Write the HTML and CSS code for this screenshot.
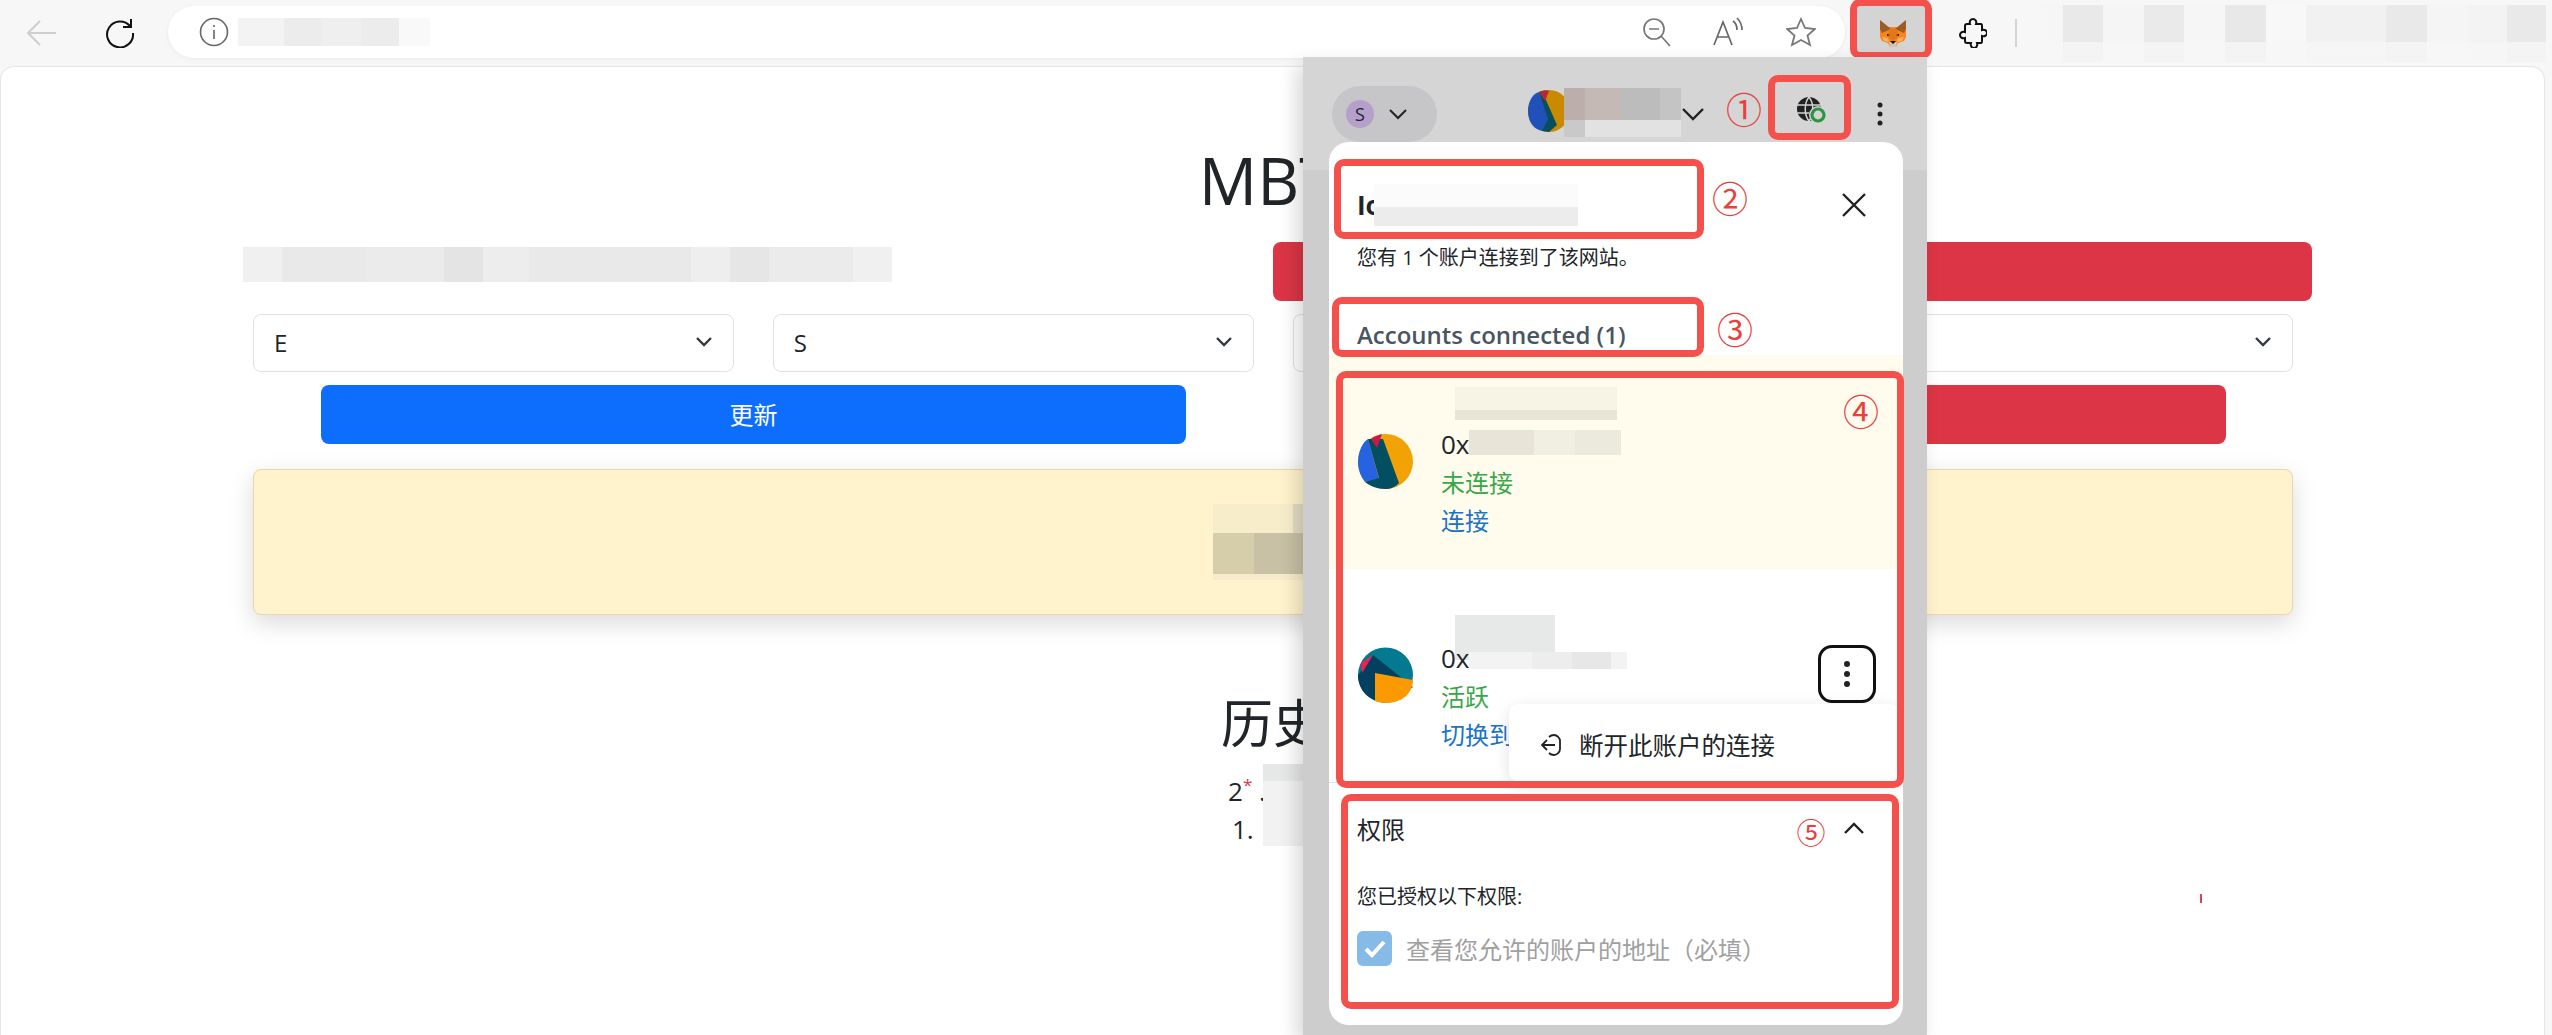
FILE: index.html
```html
<!DOCTYPE html>
<html lang="zh-CN">
<head>
    <meta charset="UTF-8">
    <title>MBTI</title>
    <link rel="stylesheet" href="styles.css">
</head>
<body>
    <header class="toolbar">
        <button class="nav-btn back">
            <svg width="30" height="26" viewBox="0 0 30 26" fill="none" stroke="#cfcfcf" stroke-width="2"><path d="M1 13h28M13 1 1 13l12 12"/></svg>
        </button>
        <button class="nav-btn reload">
            <svg width="30" height="30" viewBox="0 0 30 30" fill="none" stroke="#111" stroke-width="2"><path d="M25 8A13 13 0 1 0 28 15"/><path d="M26 1v8h-8"/></svg>
        </button>
        <div class="address">
            <svg class="info" width="30" height="30" viewBox="0 0 30 30" fill="none" stroke="#666" stroke-width="1.6"><circle cx="15" cy="15" r="13.5"/><path d="M15 13v9M15 8v2"/></svg>
            <span class="mosaic mosaic-url"></span>
            <div class="address-icons">
                <svg width="30" height="30" viewBox="0 0 30 30" fill="none" stroke="#777" stroke-width="1.7"><circle cx="12" cy="12" r="10"/><path d="M7 12h10M19 19l9 10"/></svg>
                <svg width="34" height="30" viewBox="0 0 34 30" fill="none" stroke="#666" stroke-width="1.7"><path d="M2 28 11 5l9 23M5 20h12M21 4c3 2 4 5 4 9M25 1c3 3 5 7 5 12"/></svg>
                <svg width="30" height="30" viewBox="0 0 30 30" fill="none" stroke="#777" stroke-width="1.8"><path d="m15 2 4 9 10 1-7.500 6.500L24 28l-9-5-9 5 2.500-9.500L1 12l10-1z"/></svg>
            </div>
        </div>
        <button class="fox-btn">
            <svg width="28" height="27" viewBox="0 0 28 27">
                <path fill="#f6851b" d="M1 9l6-2h14l6 2v8l-2 4-6 2-2 4h-6l-2-4-6-2-2-4z"/>
                <path fill="#9c5c26" d="M1 0l11 9-9 4-2-4zM27 0 16 9l9 4 2-4z"/>
                <path fill="#e4761b" d="M10 9h8l1 8-5 4-5-4z"/>
                <path fill="#fbb066" d="M3 17l6 1 1 4-5-1zM25 17l-6 1-1 4 5-1z"/>
                <path fill="#d7c1b3" d="M10 22h8l-1 5h-6z"/>
                <path fill="#161616" d="M11 21h6l-3 3zM8 14l3 1-3 1zM20 14l-3 1 3 1z"/>
            </svg>
        </button>
        <svg class="puzzle" width="28" height="30" viewBox="0 0 28 30" fill="none" stroke="#111" stroke-width="2"><path d="M8 6h3c-1-3 1-5 3-5s4 2 3 5h5c1 0 1 1 1 2v4c3-1 5 1 5 3s-2 4-5 3v5c0 1 0 2-1 2h-4c1 3-1 5-3 5s-4-2-3-5H8c-1 0-2-1-2-2v-3c-3 1-5-1-5-3s2-4 5-3V8c0-1 1-2 2-2z"/></svg>
        <span class="toolbar-sep"></span>
        <span class="mosaic mosaic-tools"></span>
    </header>

    <main class="page">
        <div class="content">
            <h1 class="title">MBTI</h1>
            <div class="top-row">
                <span class="mosaic mosaic-intro"></span>
                <button class="btn btn-red"></button>
            </div>
            <div class="selects">
                <div class="select">E<svg class="caret" width="18" height="12" viewBox="0 0 18 12" fill="none" stroke="#343a40" stroke-width="2.400"><path d="m2 2 7 7 7-7"/></svg></div>
                <div class="select">S<svg class="caret" width="18" height="12" viewBox="0 0 18 12" fill="none" stroke="#343a40" stroke-width="2.400"><path d="m2 2 7 7 7-7"/></svg></div>
                <div class="select"></div>
                <div class="select"><svg class="caret" width="18" height="12" viewBox="0 0 18 12" fill="none" stroke="#343a40" stroke-width="2.400"><path d="m2 2 7 7 7-7"/></svg></div>
            </div>
            <div class="actions">
                <button class="btn btn-blue">更新</button>
                <button class="btn btn-red"></button>
            </div>
            <div class="alert"><span class="mosaic mosaic-alert"></span></div>
            <h2 class="history-title">历史</h2>
            <div class="history">
                <span class="mosaic mosaic-history"></span>
                <div class="history-line">2<sup>*</sup> .</div>
                <div class="history-line">1.</div>
            </div>
        </div>
        <span class="red-tick"></span>
    </main>

    <section class="popup">
        <div class="popup-head">
            <div class="network">
                <span class="network-dot">S</span>
                <svg width="20" height="12" viewBox="0 0 20 12" fill="none" stroke="#222" stroke-width="2"><path d="m2 2 8 8 8-8"/></svg>
            </div>
            <div class="account-pick">
                <svg class="pick-avatar" width="42" height="42" viewBox="0 0 42 42">
                    <circle cx="21" cy="21" r="21" fill="#c98a00"/>
                    <path fill="#2050b8" d="M0 21C0 10 6 3 11 2l10 26-6 13C6 40 0 32 0 21z"/>
                    <path fill="#064f5c" d="M11 2l3-1 15 34-8 7-7-1 6-12z"/>
                    <path fill="#b02a3a" d="M11 2c4-2 8-2 10-1l-4 10z"/>
                </svg>
                <span class="mosaic mosaic-pick"></span>
                <svg class="pick-caret" width="24" height="14" viewBox="0 0 24 14" fill="none" stroke="#222" stroke-width="2.400"><path d="m2 2 10 10L22 2"/></svg>
            </div>
            <svg class="globe" width="30" height="28" viewBox="0 0 30 28">
                <circle cx="12" cy="12" r="12" fill="#222"/>
                <path stroke="#d4d4d4" stroke-width="1.500" fill="none" d="M0 8h24M0 16h12M12 0c-5 6-5 18 0 24M12 0c5 6 5 18 0 24"/>
                <circle cx="21" cy="18" r="9" fill="#d4d4d4"/>
                <circle cx="21" cy="18" r="6" fill="none" stroke="#2a9640" stroke-width="3.200"/>
            </svg>
            <svg class="dots" width="6" height="24" viewBox="0 0 6 24" fill="#222"><circle cx="3" cy="3" r="2.500"/><circle cx="3" cy="12" r="2.500"/><circle cx="3" cy="21" r="2.500"/></svg>
        </div>

        <div class="sheet">
            <div class="site-row">
                <strong class="site-name">Io</strong>
                <span class="mosaic mosaic-site"></span>
                <svg class="close" width="26" height="26" viewBox="0 0 26 26" fill="none" stroke="#222" stroke-width="2.400"><path d="m2 2 22 22M24 2 2 24"/></svg>
            </div>
            <p class="site-note">您有 1 个账户连接到了该网站。</p>
            <h3 class="accounts-title">Accounts connected (1)</h3>

            <div class="account account-new">
                <svg class="avatar" width="55" height="55" viewBox="0 0 55 55">
                    <circle cx="27.500" cy="27.500" r="27.500" fill="#f2a205"/>
                    <path fill="#2563e0" d="M0 28C0 17 5 8 10 5l11 40-14 3C3 43 0 36 0 28z"/>
                    <path fill="#014f60" d="M10 5l15 0 16 44c-4 4-8 6-14 6-8 0-15-3-20-7l14-4z"/>
                    <path fill="#c8174f" d="M13 5c4-3 8-4 11-5l-5 14z"/>
                </svg>
                <div class="account-info">
                    <span class="mosaic mosaic-name-a"></span>
                    <div class="address-line">0x<span class="mosaic mosaic-addr-a"></span></div>
                    <div class="status">未连接</div>
                    <a class="link">连接</a>
                </div>
            </div>

            <div class="account account-active">
                <svg class="avatar" width="55" height="56" viewBox="0 0 55 56">
                    <circle cx="27.500" cy="28" r="27.500" fill="#047a90"/>
                    <path fill="#033f5f" d="M0 28 15 8l40 32-24 16C12 56 0 44 0 28z"/>
                    <path fill="#f01e55" d="M3 16 15 8 4 26z"/>
                    <path fill="#fb9a00" d="M17 26l38 7c0 13-11 23-27 23-4 0-8-1-11-2z"/>
                </svg>
                <div class="account-info">
                    <span class="mosaic mosaic-name-b"></span>
                    <div class="address-line">0x<span class="mosaic mosaic-addr-b"></span></div>
                    <div class="status">活跃</div>
                    <a class="link">切换到此账户</a>
                </div>
                <button class="kebab">
                    <svg width="6" height="26" viewBox="0 0 6 26" fill="#222"><circle cx="3" cy="3" r="3"/><circle cx="3" cy="13" r="3"/><circle cx="3" cy="23" r="3"/></svg>
                </button>
                <div class="account-menu">
                    <svg width="20" height="22" viewBox="0 0 20 22" fill="none" stroke="#222" stroke-width="1.800"><path d="M8 3c1-1 3-2 5-2 3 0 6 3 6 6v8c0 3-3 6-6 6-2 0-4-1-5-2M14 11H1M6 6l-5 5 5 5"/></svg>
                    <span>断开此账户的连接</span>
                </div>
            </div>

            <div class="permissions">
                <div class="perm-head">
                    <span>权限</span>
                    <svg width="22" height="13" viewBox="0 0 22 13" fill="none" stroke="#222" stroke-width="2.400"><path d="m2 11 9-9 9 9"/></svg>
                </div>
                <p class="perm-note">您已授权以下权限:</p>
                <label class="perm-item">
                    <span class="checkbox">
                        <svg width="24" height="20" viewBox="0 0 24 20" fill="none" stroke="#fff" stroke-width="4"><path d="m3 10 6 6L21 3"/></svg>
                    </span>
                    查看您允许的账户的地址（必填）
                </label>
            </div>
        </div>

        <span class="mark mark-1"></span>
        <span class="mark mark-2"></span>
        <span class="mark mark-3"></span>
        <span class="mark mark-4"></span>
        <span class="mark mark-5"></span>
        <span class="num num-1">①</span>
        <span class="num num-2">②</span>
        <span class="num num-3">③</span>
        <span class="num num-4">④</span>
        <span class="num num-5">⑤</span>
    </section>
</body>
</html>
```

FILE: styles.css
```css
* {
    box-sizing: border-box;
}

html, body {
    height: 100%;
}

body {
    margin: 0;
    position: relative;
    overflow: hidden;
    background-color: #f7f7f7;
    color: #212529;
    font-family: "Open Sans", "Noto Sans CJK SC", sans-serif;
}

button {
    border: none;
    padding: 0;
    background: none;
    font-family: inherit;
}

p, h1, h2, h3 {
    margin: 0;
}

/* pixelated areas from the screenshot */
.mosaic {
    display: block;
    flex: none;
}

.mosaic-url {
    width: 192px;
    height: 28px;
    background: linear-gradient(90deg, #f3f3f3 0 24%, #ececec 24% 44%, #efefef 44% 64%, #ececec 64% 84%, #f9f9f9 84%);
}

.mosaic-tools {
    width: 505px;
    height: 57px;
    margin-left: 24px;
    background:
        linear-gradient(#0000 0 37px, rgba(247, 247, 247, 0.75) 37px),
        linear-gradient(90deg, #f6f6f6 0 22px, #e9e9e9 22px 62px, #f5f5f5 62px 103px, #eaeaea 103px 143px, #f6f6f6 143px 184px, #e8e8e8 184px 225px, #f8f8f8 225px 265px, #f1f1f1 265px 345px, #e9e9e9 345px 386px, #f5f5f5 386px 427px, #f3f3f3 427px 466px, #e9e9e9 466px);
}

.mosaic-intro {
    width: 649px;
    height: 35px;
    background: linear-gradient(90deg, #f0f0f0 0 6%, #e9e9e9 6% 19%, #ebebeb 19% 31%, #e4e4e4 31% 37%, #ededed 37% 44%, #e9e9e9 44% 69%, #eeeeee 69% 75%, #e6e6e6 75% 81%, #ebebeb 81% 94%, #f0f0f0 94%);
}

.mosaic-alert {
    width: 100px;
    height: 76px;
    margin-right: 20px;
    background:
        linear-gradient(90deg, #f8edcb 0 80px, #e3dcc5 80px) 0 0 / 100% 29px no-repeat,
        linear-gradient(#0000 70px, #f6ebca 70px),
        linear-gradient(90deg, #d6cdab 0 41px, #c9c1a5 41px);
}

.mosaic-history {
    position: absolute;
    left: 1010px;
    top: -2px;
    width: 40px;
    height: 82px;
    background: linear-gradient(#e6e7e7 0 17px, #f2f2f2 17px);
}

.mosaic-pick {
    width: 117px;
    height: 49px;
    margin-left: -12px;
    background:
        linear-gradient(90deg, #c9c9c9 0 18%, #0000 18%) 0 100% / 100% 17px no-repeat,
        linear-gradient(#0000 0 32px, #e2e2e2 32px),
        linear-gradient(90deg, #bcaeab 0 18%, #c4b9b5 18% 48%, #bcbcbc 48% 82%, #c4c4c4 82%);
}

.mosaic-site {
    width: 204px;
    height: 42px;
    margin-left: -8px;
    background: linear-gradient(#fbfbfb 0 55%, #ececec 55%);
}

.mosaic-addr-a {
    width: 152px;
    height: 25px;
    background: linear-gradient(90deg, #e8e5d8 0 43%, #f1eee2 43% 70%, #ece9dd 70%);
}

.mosaic-addr-b {
    width: 158px;
    height: 17px;
    margin-top: 8px;
    background: linear-gradient(90deg, #f3f3f3 0 40%, #ededed 40% 65%, #e7e7e7 65% 90%, #f3f3f3 90%);
}

.mosaic-name-a {
    width: 162px;
    height: 33px;
    margin-left: 14px;
    background: linear-gradient(#f7f4e6 0 70%, #e8e5d8 70%);
}

.mosaic-name-b {
    width: 100px;
    height: 45px;
    margin-left: 14px;
    margin-bottom: -16px;
    background: #e7e8e8;
}

/* browser toolbar */
.toolbar {
    display: flex;
    align-items: center;
    height: 66px;
    padding-left: 27px;
}

.nav-btn {
    display: flex;
    width: 30px;
}

.reload {
    margin-left: 48px;
}

.address {
    display: flex;
    align-items: center;
    width: 1677px;
    height: 52px;
    margin-left: 33px;
    margin-bottom: 2px;
    padding-left: 31px;
    border-radius: 26px;
    background-color: #fff;
    box-shadow: 0 1px 4px rgba(0, 0, 0, 0.06);
}

.mosaic-url {
    margin-left: 9px;
}

.address-icons {
    display: flex;
    gap: 40px;
    margin-left: auto;
    margin-right: 29px;
}

.fox-btn {
    display: flex;
    align-items: center;
    justify-content: center;
    width: 82px;
    height: 60px;
    margin-left: 5px;
    margin-top: -8px;
    padding: 8px 0 0 4px;
    border: 7px solid #f4504c;
    border-radius: 10px;
    background-color: #d4d4d4;
}

.puzzle {
    margin-left: 27px;
}

.toolbar-sep {
    width: 2px;
    height: 28px;
    margin-left: 28px;
    background-color: #d4d4d4;
}

/* page under the popup */
.page {
    position: relative;
    height: 969px;
    margin-right: 7px;
    border: 1px solid #e6e6e6;
    border-bottom: none;
    border-radius: 14px 14px 0 0;
    background-color: #fff;
}

.content {
    width: 2040px;
    margin-left: 252px;
}

.title {
    margin-top: 75px;
    padding-left: 6px;
    font-size: 65px;
    font-weight: 400;
    line-height: 76px;
    text-align: center;
}

.top-row {
    display: grid;
    grid-template-columns: 1030px 1039px;
    align-items: start;
    margin: 24px 0 0 -10px;
}

.mosaic-intro {
    margin-top: 5px;
}

.btn {
    height: 59px;
    padding-bottom: 3px;
    border-radius: 8px;
    color: #fff;
    font-size: 24px;
}

.btn-red {
    background-color: #dc3545;
}

.btn-blue {
    background-color: #0d6efd;
}

.selects {
    display: grid;
    grid-template-columns: repeat(4, 1fr);
    gap: 39px;
    margin-top: 13px;
}

.select {
    display: flex;
    align-items: center;
    justify-content: space-between;
    height: 58px;
    padding: 0 20px 2px;
    border: 1px solid #dee2e6;
    border-radius: 8px;
    background-color: #fff;
    font-size: 24px;
}

.select .caret {
    margin-left: auto;
}

.actions {
    display: grid;
    grid-template-columns: 865px 865px;
    gap: 175px;
    margin: 13px 0 0 68px;
}

.alert {
    display: flex;
    justify-content: center;
    align-items: center;
    height: 146px;
    margin-top: 25px;
    border: 1px solid #e6d8a8;
    border-radius: 8px;
    background-color: #fff3cd;
    box-shadow: 0 8px 24px rgba(0, 0, 0, 0.15);
}

.history-title {
    margin-top: 73px;
    font-size: 52px;
    font-weight: 400;
    line-height: 70px;
    text-align: center;
}

.history {
    position: relative;
    margin-top: 8px;
    padding-left: 975px;
    font-size: 26px;
    line-height: 38px;
}

.history-line:last-of-type {
    padding-left: 4px;
}

.history sup {
    color: #dc3545;
    font-size: 17px;
}

.red-tick {
    position: absolute;
    left: 2199px;
    top: 827px;
    width: 2px;
    height: 9px;
    background-color: #e0454d;
}

/* wallet popup */
.popup {
    position: absolute;
    left: 1303px;
    top: 57px;
    width: 624px;
    height: 978px;
    background: linear-gradient(#d5d5d5 0 113px, #cdcdcd 113px);
    box-shadow: -6px 8px 18px rgba(0, 0, 0, 0.16);
}

.popup-head {
    display: flex;
    align-items: center;
    height: 85px;
    padding-top: 29px;
    padding-left: 29px;
}

.network {
    display: flex;
    align-items: center;
    gap: 14px;
    width: 105px;
    height: 56px;
    margin-top: 0;
    padding-left: 14px;
    border-radius: 28px;
    background-color: #c6c6c8;
}

.network-dot {
    width: 28px;
    height: 28px;
    border-radius: 50%;
    background-color: #b5a0cc;
    font-size: 18px;
    line-height: 28px;
    text-align: center;
}

.account-pick {
    display: flex;
    align-items: center;
    margin-left: 91px;
    gap: 6px;
}

.pick-avatar {
    margin-top: -7px;
}

.mosaic-pick {
    margin-top: -4px;
}

.pick-caret {
    margin-left: -6px;
}

.globe {
    margin-left: 92px;
    margin-top: -6px;
}

.dots {
    margin-left: 50px;
    margin-top: -1px;
}

.sheet {
    width: 574px;
    height: 883px;
    margin-left: 26px;
    overflow: hidden;
    border-radius: 20px;
    background-color: #fff;
}

.site-row {
    display: flex;
    align-items: center;
    height: 30px;
    margin: 48px 0 24px;
    padding-left: 28px;
}

.site-name {
    font-size: 26px;
    line-height: 30px;
}

.close {
    margin-left: auto;
    margin-right: 36px;
}

.site-note {
    padding-left: 28px;
    font-size: 20px;
    line-height: 28px;
}

.accounts-title {
    height: 30px;
    margin: 48px 0 5px;
    padding-left: 28px;
    color: #4a5562;
    font-size: 24px;
    font-weight: 600;
    line-height: 30px;
}

.account {
    position: relative;
    display: flex;
    align-items: flex-start;
    height: 214px;
    padding-left: 29px;
}

.account-new {
    padding-top: 32px;
    background-color: #fffbed;
}

.account-active {
    padding-top: 46px;
    border-bottom: 1px solid #e4e4e4;
}

.avatar {
    flex: none;
    margin-top: 47px;
}

.account-active .avatar {
    margin-top: 32px;
}

.account-info {
    margin-left: 28px;
}

.address-line {
    display: flex;
    align-items: flex-start;
    height: 28px;
    margin-top: 10px;
    font-size: 26px;
    line-height: 28px;
}

.account-active .address-line {
    margin-top: 0;
}

.status {
    margin-top: 10px;
    color: #3aa64a;
    font-size: 24px;
    line-height: 30px;
}

.link {
    display: block;
    margin-top: 8px;
    color: #1a73c5;
    font-size: 24px;
    line-height: 30px;
}

.kebab {
    display: flex;
    align-items: center;
    justify-content: center;
    width: 58px;
    height: 58px;
    margin-left: auto;
    margin-top: 30px;
    margin-right: 27px;
    border: 3px solid #111;
    border-radius: 14px;
}

.account-menu {
    position: absolute;
    left: 180px;
    top: 135px;
    display: flex;
    align-items: center;
    gap: 18px;
    width: 391px;
    height: 78px;
    padding: 3px 0 0 32px;
    border-radius: 10px;
    background-color: #fff;
    box-shadow: 0 4px 16px rgba(0, 0, 0, 0.12);
    font-size: 24.5px;
}

.permissions {
    padding: 30px 0 0 28px;
}

.perm-head {
    display: flex;
    align-items: center;
    justify-content: space-between;
    height: 30px;
    padding-right: 38px;
    font-size: 24px;
}

.perm-note {
    margin-top: 40px;
    font-size: 20px;
    line-height: 28px;
}

.perm-item {
    display: flex;
    align-items: center;
    gap: 14px;
    margin-top: 20px;
    color: #a0a0a0;
    font-size: 24px;
}

.checkbox {
    display: flex;
    align-items: center;
    justify-content: center;
    width: 35px;
    height: 35px;
    border-radius: 6px;
    background-color: #85bbe6;
}

/* red annotation boxes and numbers drawn over the shot */
.mark {
    position: absolute;
    border: 7px solid #f4504c;
    border-radius: 10px;
}

.mark-1 {
    left: 465px;
    top: 18px;
    width: 83px;
    height: 65px;
}

.mark-2 {
    left: 31px;
    top: 102px;
    width: 370px;
    height: 80px;
}

.mark-3 {
    left: 29px;
    top: 240px;
    width: 372px;
    height: 60px;
}

.mark-4 {
    left: 33px;
    top: 314px;
    width: 568px;
    height: 417px;
}

.mark-5 {
    left: 38px;
    top: 737px;
    width: 558px;
    height: 215px;
}

.num {
    position: absolute;
    width: 40px;
    color: #e8413c;
    font-family: "Noto Sans CJK SC", sans-serif;
    font-size: 36px;
    line-height: 40px;
    text-align: center;
}

.num-1 { left: 421px; top: 31px; }
.num-2 { left: 407px; top: 120px; }
.num-3 { left: 412px; top: 251px; }
.num-4 { left: 538px; top: 333px; }
.num-5 { left: 488px; top: 754px; font-size: 29px; }
```
